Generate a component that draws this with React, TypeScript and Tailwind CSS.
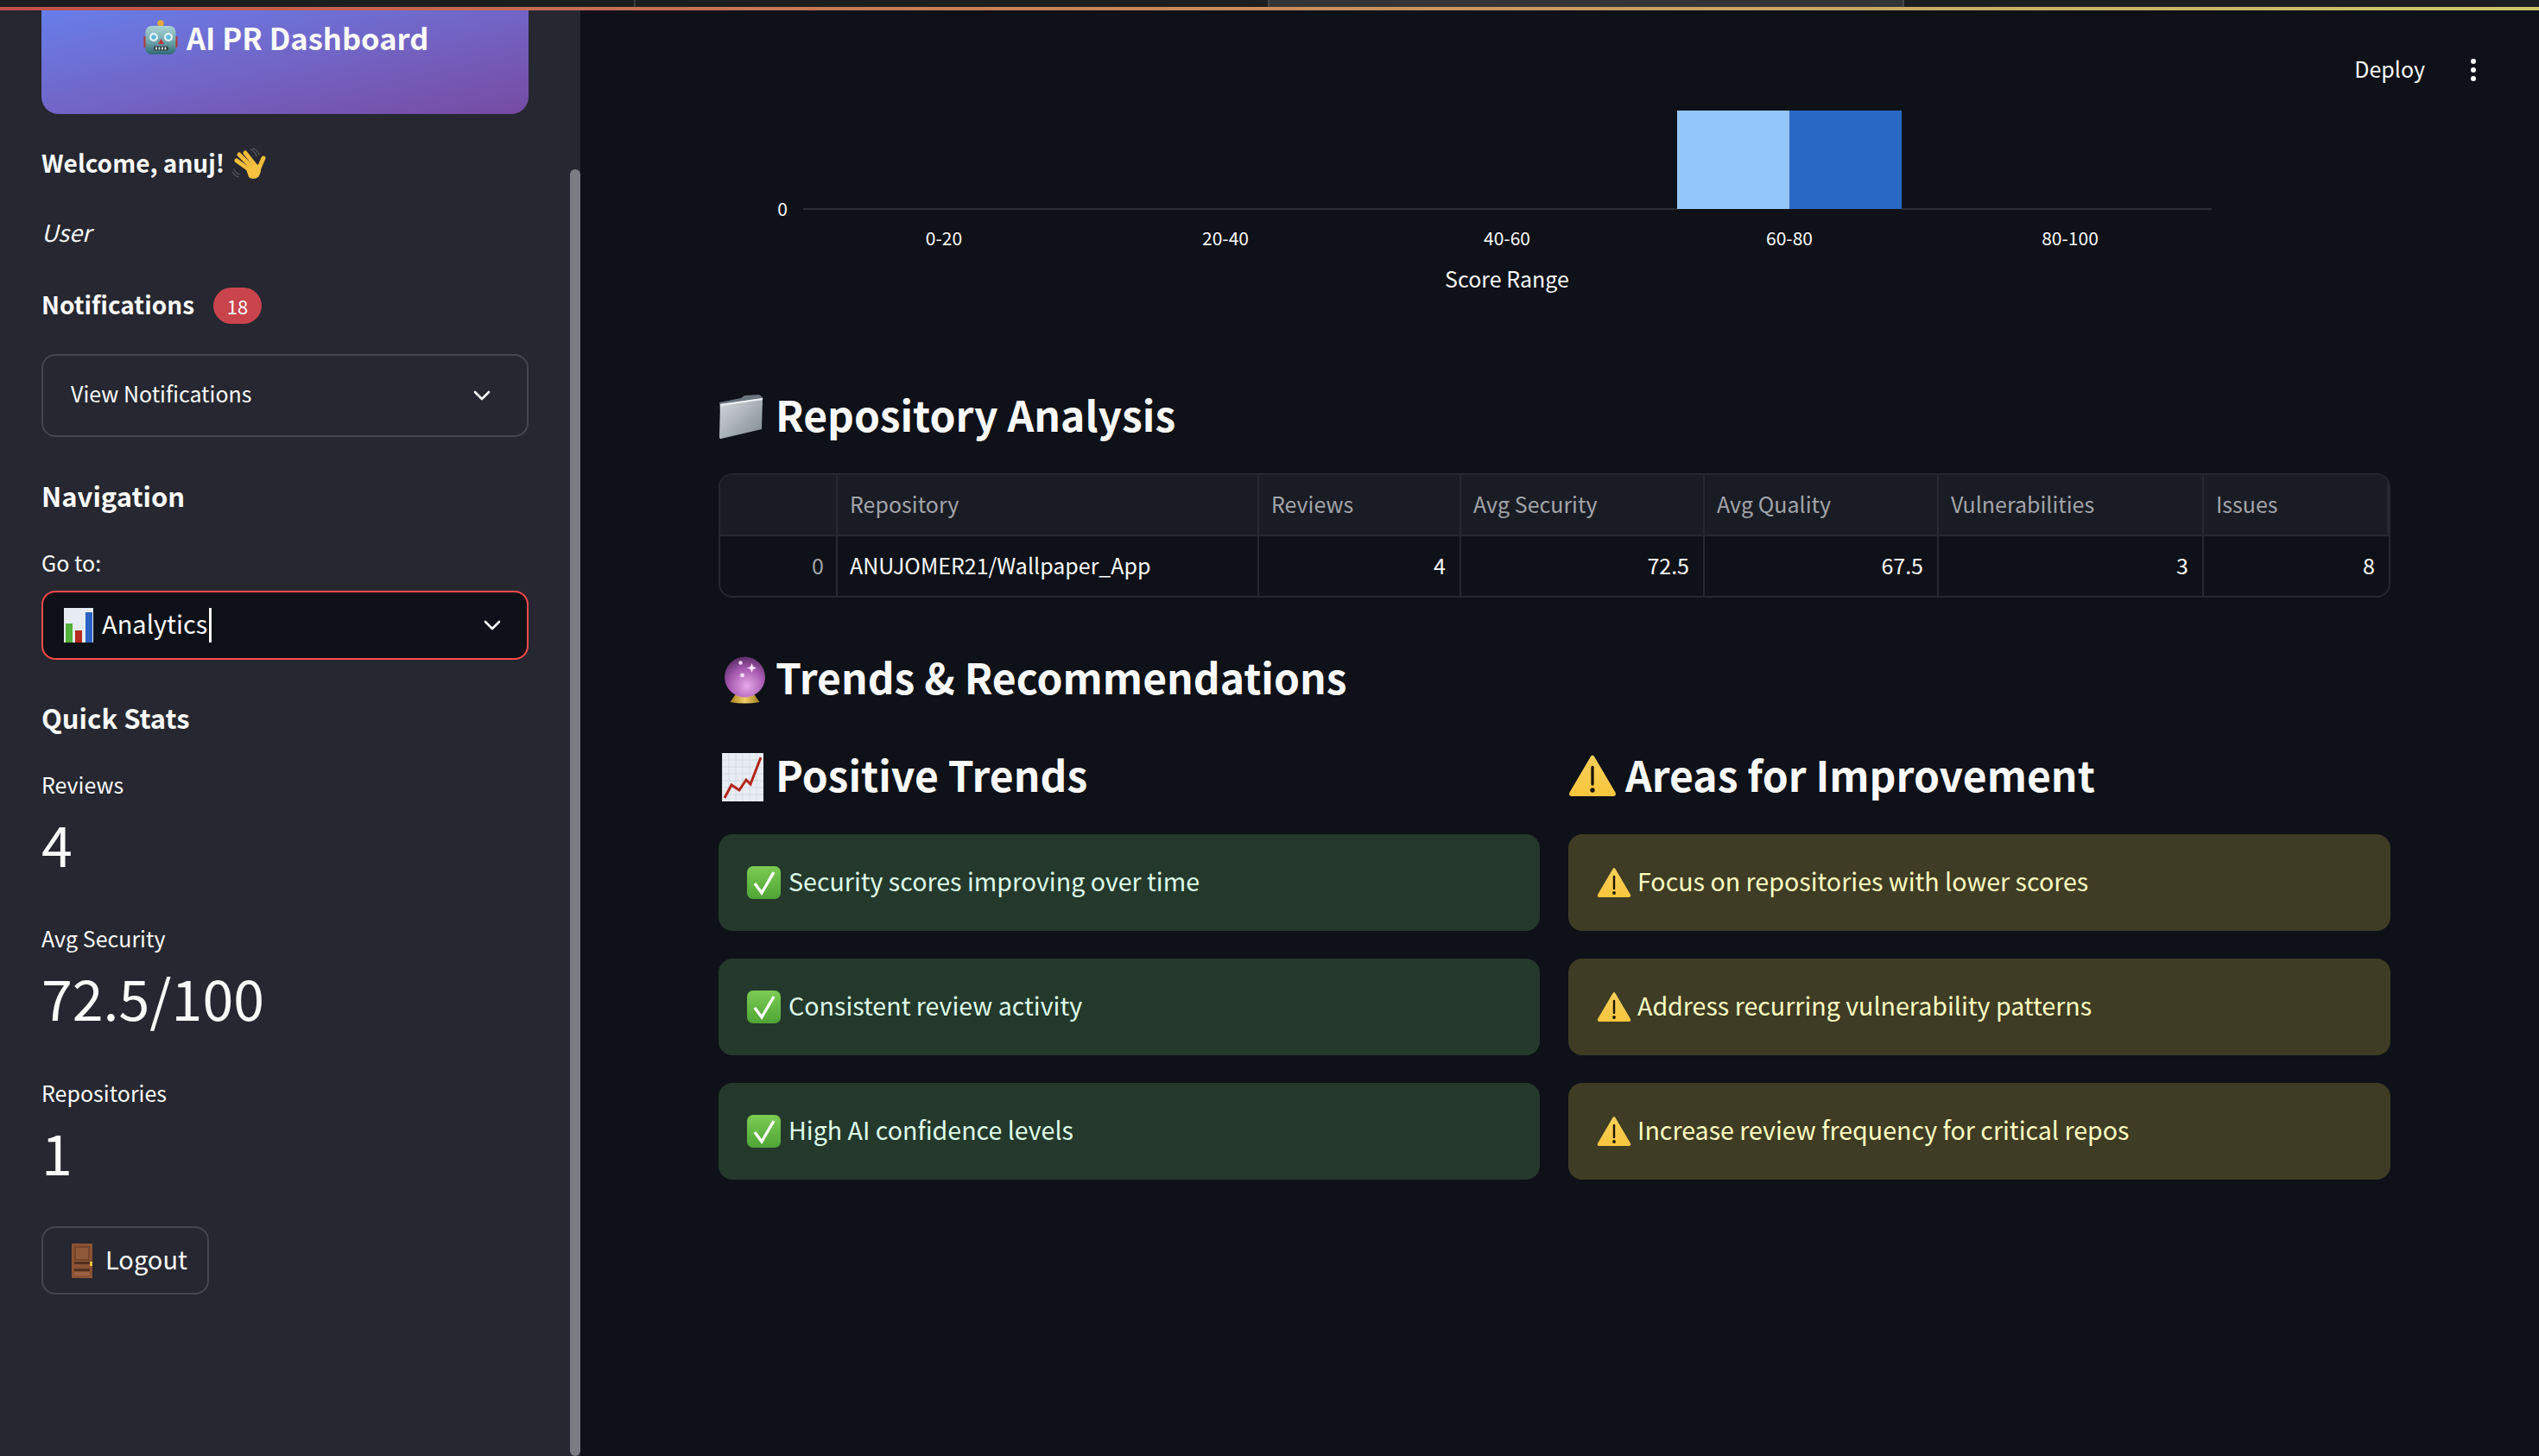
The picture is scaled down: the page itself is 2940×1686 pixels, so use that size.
import React from "react";

const Robot = () => (
  <svg width="40" height="44" viewBox="16 6 40 44" className="shrink-0">
    <defs>
      <linearGradient id="rh" x1="0" y1="0" x2="0" y2="1">
        <stop offset="0" stopColor="#a9d3d6" />
        <stop offset="0.55" stopColor="#6fa5ad" />
        <stop offset="1" stopColor="#2f6874" />
      </linearGradient>
    </defs>
    <rect x="16.5" y="26" width="3" height="13" rx="1.2" fill="#b03a32" />
    <rect x="52.5" y="26" width="3" height="13" rx="1.2" fill="#b03a32" />
    <circle cx="36" cy="11" r="3.8" fill="#e3a83c" />
    <rect x="18.5" y="14" width="35" height="33" rx="7" fill="url(#rh)" />
    <circle cx="28" cy="27" r="5" fill="#e4f3f6" />
    <circle cx="28" cy="27" r="2.8" fill="#62b7d4" />
    <circle cx="45" cy="27" r="5" fill="#e4f3f6" />
    <circle cx="45" cy="27" r="2.8" fill="#62b7d4" />
    <path d="M36.5 29 L32.8 35 H40.2 Z" fill="#b8373a" />
    <rect x="28" y="37.5" width="17" height="5" rx="2.5" fill="#2d3a40" />
    <path d="M31 38.5v3M34.5 38.5v3M38 38.5v3M41.5 38.5v3" stroke="#dfe5e6" strokeWidth="1.8" />
  </svg>
);

const Wave = () => (
  <svg width="42" height="38" viewBox="8 7 42 38" className="shrink-0">
    <g stroke="#6d6d73" strokeWidth="1" fill="none" strokeLinecap="round">
      <path d="M29 9 Q35 11 36 17" />
      <path d="M32 8 Q38 10 39 15" />
      <path d="M7 33 Q9 39 15 41" />
      <path d="M10 32 Q11 36 16 38" />
    </g>
    <g stroke="#f3bd3c" strokeWidth="5" strokeLinecap="round" fill="none">
      <path d="M16 15 L30 29" />
      <path d="M23 13 L34 27" />
      <path d="M13 22 L27 32" />
      <path d="M44 19 L38 33" />
    </g>
    <path d="M24 32 L33 25 L41 28 Q42 36 38 41 Q32 45 27 41 Z" fill="#f5c13f" />
  </svg>
);

const BarEmoji = () => (
  <svg width="34" height="40" viewBox="0 0 34 40" className="shrink-0">
    <rect width="34" height="40" fill="#e6ecf2" />
    <rect x="2" y="18" width="8" height="22" fill="#53b03a" />
    <rect x="13" y="26" width="8" height="14" fill="#b52a1c" />
    <rect x="25" y="5" width="8" height="35" fill="#2a62c4" />
  </svg>
);

const Door = () => (
  <svg width="24" height="40" viewBox="0 0 24 40" className="shrink-0">
    <rect width="24" height="40" fill="#8a5233" />
    <rect x="3" y="3" width="18" height="17" fill="#75452b" />
    <rect x="5" y="5" width="14" height="13" fill="#90593a" />
    <rect x="3" y="21" width="18" height="3" fill="#533020" />
    <rect x="3" y="29" width="18" height="3" fill="#533020" />
    <rect x="3" y="33" width="18" height="4" fill="#9a6241" />
    <rect x="21" y="21" width="3" height="5" fill="#eac23e" />
  </svg>
);

const Folder = () => (
  <svg width="52" height="52" viewBox="0 0 52 52" className="shrink-0">
    <defs>
      <linearGradient id="fo" x1="0" y1="0" x2="1" y2="1">
        <stop offset="0" stopColor="#d6dade" />
        <stop offset="1" stopColor="#7f8992" />
      </linearGradient>
    </defs>
    <path d="M1 9 L26 4 L30 1 L47 0 L51 3 L51 12 L2 20 Z" fill="#6c7680" />
    <path d="M2 11 L51 4 L50 40 L3 51 Q1 52 1 48 Z" fill="url(#fo)" />
    <path d="M2 11 L51 4 L51 6 L2 13 Z" fill="#eef1f3" />
  </svg>
);

const Ball = () => (
  <svg width="48" height="56" viewBox="12 7 47 56" className="shrink-0">
    <defs>
      <radialGradient id="ba" cx="0.55" cy="0.72" r="0.8">
        <stop offset="0" stopColor="#e7a9e9" />
        <stop offset="0.55" stopColor="#a458ae" />
        <stop offset="1" stopColor="#4a2356" />
      </radialGradient>
      <linearGradient id="bb" x1="0" y1="0" x2="1" y2="0">
        <stop offset="0" stopColor="#a8811f" />
        <stop offset="0.5" stopColor="#f0cf68" />
        <stop offset="1" stopColor="#a07a1d" />
      </linearGradient>
    </defs>
    <path d="M26 51 H46 L53 61 Q36 64 19 61 Z" fill="url(#bb)" />
    <circle cx="36" cy="32" r="23.5" fill="url(#ba)" />
    <path d="M44 16 l1.5 4 4 1.5 -4 1.5 -1.5 4 -1.5 -4 -4 -1.5 4 -1.5 Z" fill="#f8e6f8" />
    <circle cx="31" cy="15.5" r="2.2" fill="#f4dcf4" />
    <circle cx="33" cy="30" r="2.4" fill="#f4dcf4" />
  </svg>
);

const TrendChart = () => (
  <svg width="48" height="56" viewBox="0 0 48 56" className="shrink-0">
    <rect width="48" height="56" fill="#e8edf1" />
    <path d="M0.5 0 V56 M8 0 V56 M16 0 V56 M24 0 V56 M32 0 V56 M40 0 V56 M0 8 H48 M0 16 H48 M0 24 H48 M0 32 H48 M0 40 H48 M0 48 H48" stroke="#cbd6de" strokeWidth="0.7" />
    <path d="M3 52 L11 37 L20 43 L28 31 L33 36 L45 5" fill="none" stroke="#b3261c" strokeWidth="3" />
  </svg>
);

const Warn = ({ size = 40 }: { size?: number }) => (
  <svg width={size} height={size * 0.9} viewBox="0 0 40 36" className="shrink-0">
    <defs>
      <linearGradient id="wa" x1="0" y1="0" x2="0" y2="1">
        <stop offset="0" stopColor="#f6cf5a" />
        <stop offset="1" stopColor="#f8c63e" />
      </linearGradient>
    </defs>
    <path d="M20 1 Q21 1 22 3 L39 32 Q40 35 37 35 H3 Q0 35 1 32 L18 3 Q19 1 20 1 Z" fill="url(#wa)" />
    <path d="M20 11 V25" stroke="#1c1608" strokeWidth="2.4" strokeLinecap="round" />
    <circle cx="20" cy="30" r="1.9" fill="#1c1608" />
  </svg>
);

const Check = () => (
  <svg width="39" height="38" viewBox="0 0 39 38" className="shrink-0">
    <defs>
      <linearGradient id="ch" x1="0" y1="0" x2="0" y2="1">
        <stop offset="0" stopColor="#7ccb53" />
        <stop offset="1" stopColor="#4fa535" />
      </linearGradient>
    </defs>
    <rect width="39" height="38" rx="7" fill="url(#ch)" />
    <path d="M9 20 L17 31 L31 7" fill="none" stroke="#ffffff" strokeWidth="3.4" />
  </svg>
);

const Chevron = () => (
  <svg width="20" height="12" viewBox="0 0 20 12" fill="none" stroke="#fafafa" strokeWidth="2.6" strokeLinecap="round" strokeLinejoin="round">
    <path d="M2 2 L10 10 L18 2" />
  </svg>
);

const Stat = ({ label, value, className }: { label: string; value: string; className: string }) => (
  <div className={className}>
    <div className="h-10 text-[25px] leading-[35px]">{label}</div>
    <div className="mt-[13px] h-[72px] text-[64.5px] leading-[64px]">{value}</div>
  </div>
);

const chartTicks = [
  { x: 261, t: "0-20" },
  { x: 587, t: "20-40" },
  { x: 913, t: "40-60" },
  { x: 1240, t: "60-80" },
  { x: 1565, t: "80-100" },
];

const Chart = () => (
  <svg width="1936" height="340" viewBox="0 0 1936 340" className="block" fontFamily="'Noto Sans CJK SC', sans-serif" fill="#fafafa">
    <rect x="1110" y="116" width="130" height="114" fill="#93c7fa" />
    <rect x="1240" y="116" width="130" height="114" fill="#2a68c5" />
    <rect x="98" y="229" width="1012" height="2" fill="#2c2e36" />
    <rect x="1370" y="229" width="359" height="2" fill="#2c2e36" />
    <text x="74" y="229" textAnchor="middle" dominantBaseline="central" fontSize="21">0</text>
    {chartTicks.map((c) => (
      <text key={c.t} x={c.x} y="263" textAnchor="middle" dominantBaseline="central" fontSize="21">
        {c.t}
      </text>
    ))}
    <text x="913" y="310" textAnchor="middle" dominantBaseline="central" fontSize="25">Score Range</text>
  </svg>
);

const columns = ["", "Repository", "Reviews", "Avg Security", "Avg Quality", "Vulnerabilities", "Issues"];
const row = ["0", "ANUJOMER21/Wallpaper_App", "4", "72.5", "67.5", "3", "8"];

const Table = () => (
  <div className="mt-[29px] grid h-[144px] w-[1936px] grid-cols-[136px_488px_234px_282px_271px_307px_214px] grid-rows-[71px_69px] overflow-hidden rounded-2xl border-2 border-[#26282e] text-[25px] leading-[32px]">
    {columns.map((c, i) => (
      <div
        key={i}
        className="flex items-center border-b-2 border-r-2 border-[#26282e] bg-[#1a1c24] px-[14px] pb-[4px] text-[#a2a4a9] last:border-r-0"
      >
        {c}
      </div>
    ))}
    {row.map((c, i) => (
      <div
        key={i}
        className={
          i === 0
            ? "flex items-center justify-end border-r-2 border-[#26282e] px-[14px] pb-[4px] text-[#a2a4a9]"
            : i === 1
              ? "flex items-center border-r-2 border-[#26282e] px-[14px] pb-[4px] text-[#fafafa]"
              : "flex items-center justify-end border-r-2 border-[#26282e] px-[16px] pb-[4px] text-[#fafafa] last:border-r-0"
        }
      >
        {c}
      </div>
    ))}
  </div>
);

const good = ["Security scores improving over time", "Consistent review activity", "High AI confidence levels"];
const bad = [
  "Focus on repositories with lower scores",
  "Address recurring vulnerability patterns",
  "Increase review frequency for critical repos",
];

export default function App() {
  return (
    <div className="flex h-[1686px] w-[2940px] flex-col overflow-hidden bg-[#0e1117] font-['Noto_Sans_CJK_SC','Liberation_Sans',sans-serif] text-[#fafafa]">
      {/* browser strip */}
      <div className="flex h-2 shrink-0 bg-[#1c1d1f]">
        <div className="ml-[734px] w-[2px] bg-[#3a3b3d]" />
        <div className="ml-[732px] w-[737px] border-x-2 border-[#45464a] bg-[#333436]" />
      </div>
      <div className="h-1 shrink-0 bg-gradient-to-r from-[#c04f4b] to-[#c9c76c]" />

      <div className="flex min-h-0 flex-1">
        {/* sidebar */}
        <aside className="relative w-[672px] shrink-0 bg-[#262730] pl-12 pr-[60px]">
          <div className="absolute bottom-0 right-0 top-[184px] w-3 rounded-full bg-[#7b7b82]" />
          <div className="h-[120px] rounded-b-[20px] bg-gradient-to-br from-[#667eea] to-[#764ba2] pt-[8px]">
            <div className="flex h-12 items-center gap-[10px] pl-[118px] text-[34.5px] font-semibold leading-[44px]">
              <Robot />
              <span className="mb-[2px]">AI PR Dashboard</span>
            </div>
          </div>

          <div className="mt-[34px] flex h-12 items-center gap-[9px] text-[28px] font-semibold">
            <span className="mb-[4px]">Welcome, anuj!</span>
            <Wave />
          </div>
          <div className="mt-[33px] h-12 text-[27px] italic leading-[44px]">User</div>
          <div className="mt-[38px] flex h-[42px] items-center gap-[22px]">
            <span className="mb-[4px] text-[28px] font-semibold">Notifications</span>
            <span className="flex h-[42px] w-[56px] items-center justify-center rounded-full bg-[#c9444c] text-[22px]">18</span>
          </div>

          <div className="mt-[35px] flex h-[96px] items-center justify-between rounded-2xl border-2 border-[#45464f] pl-8 pr-[42px] text-[25px]">
            <span className="mb-[4px]">View Notifications</span>
            <Chevron />
          </div>

          <div className="mt-[45px] h-[52px] text-[31px] font-semibold leading-[46px]">Navigation</div>
          <div className="mt-[30px] h-10 text-[25px] leading-[36px]">Go to:</div>
          <div className="mt-[11px] flex h-20 items-center rounded-2xl border-2 border-[#ff4b4b] bg-[#0e1117] pl-6 pr-[30px]">
            <BarEmoji />
            <span className="mb-[4px] ml-[10px] text-[29px]">Analytics</span>
            <span className="ml-[2px] h-10 w-[3px] bg-[#fafafa]" />
            <span className="ml-auto flex">
              <Chevron />
            </span>
          </div>

          <div className="mt-[43px] h-[52px] text-[31px] font-semibold leading-[48px]">Quick Stats</div>
          <Stat className="mt-[32px]" label="Reviews" value="4" />
          <Stat className="mt-[53px]" label="Avg Security" value="72.5/100" />
          <Stat className="mt-[54px]" label="Repositories" value="1" />

          <div className="mt-[47px] flex h-[79px] w-[194px] items-center rounded-2xl border-2 border-[#45464f] pl-[33px] text-[29px]">
            <Door />
            <span className="mb-[4px] ml-[15px]">Logout</span>
          </div>
        </aside>

        {/* main */}
        <main className="relative min-w-0 flex-1 pl-40">
          <div className="absolute right-[72px] top-[49px] flex items-center gap-[52px]">
            <span className="mb-[4px] text-[25px] leading-[36px]">Deploy</span>
            <svg width="8" height="28" viewBox="0 0 8 28" fill="#fafafa">
              <circle cx="4" cy="4" r="3" />
              <circle cx="4" cy="14" r="3" />
              <circle cx="4" cy="24" r="3" />
            </svg>
          </div>

          <Chart />

          <div className="mt-[95px] flex h-[72px] w-[1936px] items-center gap-[14px] text-[48px] font-semibold leading-[72px]">
            <Folder />
            <span className="mb-[8px]">Repository Analysis</span>
          </div>
          <Table />

          <div className="mt-[59px] flex h-[72px] items-center gap-[12px] pl-[6px] text-[48px] font-semibold leading-[72px]">
            <Ball />
            <span className="mb-[8px]">Trends &amp; Recommendations</span>
          </div>

          <div className="mt-[41px] grid w-[1936px] grid-cols-[951px_952px] gap-x-[33px]">
            <div>
              <div className="flex h-[72px] items-center gap-[14px] pl-[4px] text-[48px] font-semibold leading-[72px]">
                <TrendChart />
                <span className="mb-[8px]">Positive Trends</span>
              </div>
              <div className="mt-[30px] flex flex-col gap-8">
                {good.map((g) => (
                  <div key={g} className="flex h-[112px] items-center gap-[9px] rounded-2xl bg-[#24392c] pl-[33px] text-[28.6px] text-[#dffde9]">
                    <Check />
                    <span className="mb-[4px]">{g}</span>
                  </div>
                ))}
              </div>
            </div>
            <div>
              <div className="flex h-[72px] items-center gap-[10px] text-[48px] font-semibold leading-[72px]">
                <span className="mb-[4px] flex">
                  <Warn size={56} />
                </span>
                <span className="mb-[8px]">Areas for Improvement</span>
              </div>
              <div className="mt-[30px] flex flex-col gap-8">
                {bad.map((b) => (
                  <div key={b} className="flex h-[112px] items-center gap-[7px] rounded-2xl bg-[#3e3c24] pl-[33px] text-[28.6px] text-[#ffffc2]">
                    <Warn size={40} />
                    <span className="mb-[4px]">{b}</span>
                  </div>
                ))}
              </div>
            </div>
          </div>
        </main>
      </div>
    </div>
  );
}
